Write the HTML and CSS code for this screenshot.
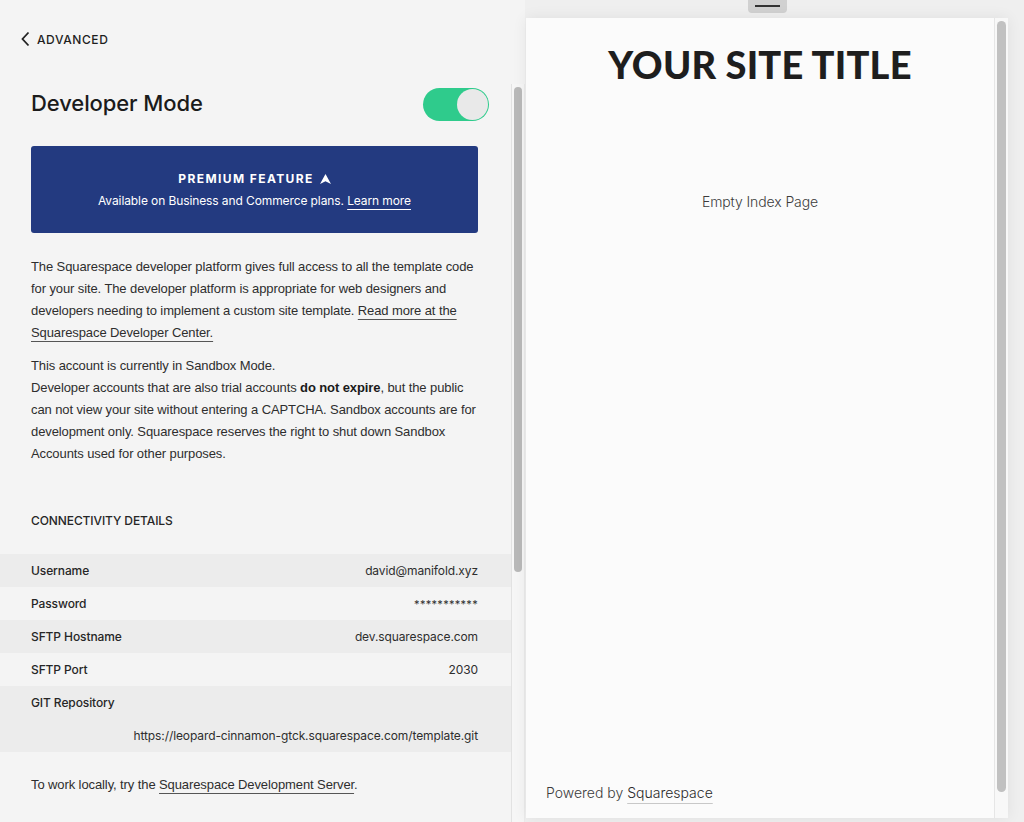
FILE: index.html
```html
<!DOCTYPE html>
<html>
<head>
<meta charset="utf-8">
<link rel="stylesheet" href="styles.css">
</head>
<body>
<div class="app">
  <aside class="sidebar">
    <div class="topbar">
      <a class="back">
        <svg class="chev" width="10" height="16" viewBox="0 0 10 16"><path d="M8.5 1.5 L2.5 8 L8.5 14.5" fill="none" stroke="#222" stroke-width="1.8"/></svg>
        <span>ADVANCED</span>
      </a>
    </div>
    <div class="scroller">
      <div class="content">
        <div class="titlerow">
          <h1>Developer Mode</h1>
          <div class="toggle"><div class="knob"></div></div>
        </div>
        <div class="premium">
          <div class="ptitle">PREMIUM FEATURE <svg width="11" height="10" viewBox="0 0 11 10"><path d="M5.5 0 L11 10 L5.5 7.2 L0 10 Z" fill="#fff"/></svg></div>
          <div class="psub">Available on Business and Commerce plans. <span class="ulink">Learn more</span></div>
        </div>
        <p class="para">The Squarespace developer platform gives full access to all the template code for your site. The developer platform is appropriate for web designers and developers needing to implement a custom site template. <span class="link">Read more at the Squarespace Developer Center.</span></p>
        <p class="para">This account is currently in Sandbox Mode.<br>Developer accounts that are also trial accounts <b>do not expire</b>, but the public can not view your site without entering a CAPTCHA. Sandbox accounts are for development only. Squarespace reserves the right to shut down Sandbox Accounts used for other purposes.</p>
        <h2 class="section">CONNECTIVITY DETAILS</h2>
        <div class="table">
          <div class="row shade"><span class="label">Username</span><span class="value">david@manifold.xyz</span></div>
          <div class="row"><span class="label">Password</span><span class="value stars">***********</span></div>
          <div class="row shade"><span class="label">SFTP Hostname</span><span class="value">dev.squarespace.com</span></div>
          <div class="row"><span class="label">SFTP Port</span><span class="value">2030</span></div>
          <div class="row shade tall"><span class="label">GIT Repository</span><span class="value url">https://leopard-cinnamon-gtck.squarespace.com/template.git</span></div>
        </div>
        <p class="para foot">To work locally, try the <span class="link">Squarespace Development Server</span>.</p>
      </div>
      <div class="track"><div class="thumb"></div></div>
    </div>
  </aside>
  <main class="preview">
    <div class="handle"><span></span></div>
    <div class="frame">
      <div class="site">
        <div class="sitetitle">YOUR SITE TITLE</div>
        <div class="empty">Empty Index Page</div>
        <div class="powered">Powered by <span class="plink">Squarespace</span></div>
      </div>
      <div class="ftrack"><div class="fthumb"></div></div>
    </div>
  </main>
</div>
</body>
</html>
```
FILE: styles.css
```css
* { box-sizing: border-box; }
html, body { margin: 0; padding: 0; }
body {
  width: 1024px;
  height: 822px;
  overflow: hidden;
  font-family: "Inter", "Liberation Sans", sans-serif;
  color: #2b2b2b;
  background: #f4f4f4;
}
.app { display: flex; height: 822px; }

/* sidebar */
.sidebar {
  width: 525px;
  display: flex;
  flex-direction: column;
  background: #f4f4f4;
}
.topbar { height: 84px; padding: 31px 0 0 20px; }
.back { display: inline-flex; align-items: center; gap: 7px; color: #1e1e1e; font-size: 12px; font-weight: 500; letter-spacing: 0.6px; }
.chev { display: block; }
.scroller { flex: 1; display: flex; min-height: 0; }
.content { width: 511px; padding-top: 1px; }
.track {
  width: 14px;
  border-left: 1px solid #e2e2e2;
  border-right: 1px solid #ebebeb;
  background: #f6f6f6;
  padding: 3px 2px 0 2px;
}
.thumb { width: 8px; height: 485px; background: #b9b9b9; border-radius: 4px; }

.titlerow { display: flex; align-items: center; justify-content: space-between; padding: 0 22px 0 31px; height: 37px; margin-top: 1px; }
h1 { margin: 0 0 3px; font-size: 22px; font-weight: 500; color: #1b1b1b; letter-spacing: -0.1px; }
.toggle { width: 66px; height: 33px; border-radius: 17px; background: #2fcb8c; position: relative; }
.knob { position: absolute; right: 1px; top: 1px; width: 31px; height: 31px; border-radius: 50%; background: #e9e9e9; }

.premium {
  margin: 23px 33px 0 31px;
  height: 87px;
  background: #233a80;
  border-radius: 3px;
  color: #fff;
  display: flex; flex-direction: column; align-items: center; justify-content: center;
  gap: 7px;
}
.ptitle { font-size: 12px; font-weight: 700; letter-spacing: 1.4px; display: flex; align-items: center; gap: 6px; }
.psub { font-size: 12px; letter-spacing: -0.1px; }
.ulink { text-decoration: underline; text-decoration-thickness: 1px; text-underline-offset: 4px; }

.para { margin: 23px 33px 0 31px; font-family: "Liberation Sans", "Arial", sans-serif; font-size: 13px; line-height: 22px; color: #2e2e2e; letter-spacing: -0.1px; }
.para + .para { margin-top: 11px; }
.para b { font-weight: 700; color: #1a1a1a; }
.link { text-decoration: underline; text-decoration-color: #555; text-decoration-thickness: 1px; text-underline-offset: 4px; }

.section { margin: 48px 0 0 31px; font-size: 12px; font-weight: 500; color: #262626; letter-spacing: -0.1px; }
.table { margin-top: 26px; }
.row { height: 33px; display: flex; align-items: center; justify-content: space-between; padding: 0 33px 0 31px; font-size: 12px; letter-spacing: -0.1px; }
.row.shade { background: #ececec; }
.row.tall { height: 66px; flex-wrap: wrap; align-content: stretch; }
.row.tall .label, .row.tall .value { width: 100%; height: 33px; display: flex; align-items: center; }
.row.tall .value { justify-content: flex-end; }
.label { font-weight: 500; color: #262626; }
.value { color: #2e2e2e; }
.stars { font-size: 11px; letter-spacing: 0.3px; }
.foot { margin-top: 22px; }

/* preview */
.preview {
  flex: 1;
  display: flex;
  flex-direction: column;
  align-items: flex-start;
  background: #efefef;
  padding: 0 15px 4px 1px;
}
.handle {
  align-self: center;
  width: 39px; height: 13px;
  background: #d1d1d1;
  border-radius: 0 0 4px 4px;
  display: flex; align-items: center; justify-content: center;
  margin-bottom: 5px;
}
.handle span { display: block; width: 25px; height: 2px; background: #333; margin-top: -1px; }
.frame {
  flex: 1;
  width: 482px;
  display: flex;
  box-shadow: 0 0 14px rgba(0,0,0,0.07);
}
.site {
  width: 468px;
  background: #fbfbfb;
  display: flex;
  flex-direction: column;
  align-items: center;
  position: relative;
}
.sitetitle {
  margin-top: 25px;
  font-family: "Lato", "DejaVu Sans", sans-serif;
  font-weight: 900;
  font-size: 38px;
  letter-spacing: 0.2px;
  color: #1e1e1e;
  line-height: 42px;
}
.empty { margin-top: 108px; font-size: 14px; color: #3c3c3c; font-weight: 300; letter-spacing: -0.1px; }
.powered { margin-top: auto; align-self: flex-start; margin-left: 20px; margin-bottom: 17px; font-size: 14px; color: #3c3c3c; font-weight: 300; }
.plink { text-decoration: underline; text-decoration-color: #c8c8c8; text-decoration-thickness: 1px; text-underline-offset: 5px; color: #2a2a2a; }
.ftrack { width: 14px; background: #f8f8f8; border-left: 1px solid #e6e6e6; padding: 3px 2px 0 2px; }
.fthumb { width: 9px; height: 771px; background: #c1c1c1; border-radius: 5px; }
```
